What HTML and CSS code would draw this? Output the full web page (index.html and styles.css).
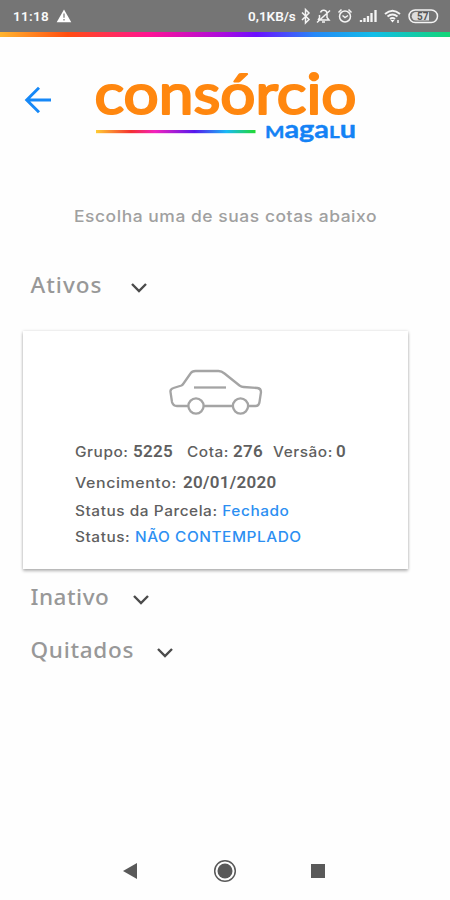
FILE: index.html
```html
<!DOCTYPE html>
<html lang="pt-BR">
<head>
<meta charset="utf-8">
<title>Consórcio Magalu</title>
<link rel="stylesheet" href="styles.css">
</head>
<body>
<div class="status">
  <span class="clock">11:18</span>
  <svg class="warning" width="16" height="14" viewBox="0 0 16 14"><path d="M8 .5 15.3 13.3H.7Z" fill="#fff"/><path d="M8 4.5v4.3M8 10v1.6" stroke="#888" stroke-width="1.4"/></svg>
  <span class="speed">0,1KB/s</span>
  <svg class="indicators" width="143" height="18" viewBox="299 7 143 18" fill="none" stroke="#f4f4f4" stroke-width="1.5">
    <path d="m302 12.500 7 7-3.500 3.500v-13.500l3.500 3.500-7 7"/>
    <path d="M318 20h11l-2-2.500v-4c0-4-5.500-4.500-6.500-1M319.500 15v3L318 20M322 22h3M317 22.500l13-12"/>
    <circle cx="345" cy="16.500" r="5.500"/><path d="M342.500 15.500l2.500 2 3-2M338.500 12.500l3-3M351.500 12.500l-3-3"/>
    <path d="M361 22v-2M364.500 22v-4M368 22v-6M371.500 22v-9M375.500 22V10" stroke-width="2.300"/>
    <path d="M385 14q7.500-6.500 15 0M387.500 16.500q5-4 10 0M390 19q2.500-2 5 0" stroke-width="2"/><path d="m390.500 20 2 2.500 2-2.500Z" fill="#fff" stroke="none"/><path d="M398 20v3"/>
    <rect x="409" y="10" width="28.500" height="12.500" rx="6.250"/><path d="M416 12h13v8.500h-13a4.200 4.200 0 0 1 0-8.500" fill="#ddd" stroke="none"/>
    <text class="battery" x="417" y="20">57</text>
  </svg>
</div>
<div class="rainbow"></div>
<header class="header">
  <svg class="back" width="28" height="28" viewBox="0 0 28 28"><path d="M27 14H2.500M15 1.700 2.700 14 15 26.300" fill="none" stroke="#1688f7" stroke-width="2.900"/></svg>
  <svg class="logo" width="266" height="80" viewBox="92 67 266 80">
    <defs><linearGradient id="line" x1="96" x2="255" y1="0" y2="0" gradientUnits="userSpaceOnUse"><stop stop-color="#fc3"/><stop offset=".22" stop-color="#f43030"/><stop offset=".37" stop-color="#f321bd"/><stop offset=".62" stop-color="#5518ed"/><stop offset=".82" stop-color="#19b9f5"/><stop offset="1" stop-color="#21d934"/></linearGradient></defs>
    <text class="brand" x="94.500" y="113.500" textLength="262" lengthAdjust="spacingAndGlyphs">consórcio</text>
    <rect x="96" y="130" width="159.500" height="3.200" fill="url(#line)"/>
    <text class="magalu" x="265" y="138" textLength="91" lengthAdjust="spacingAndGlyphs"><tspan class="cap">M</tspan>aga<tspan class="cap">L</tspan>u</text>
  </svg>
</header>
<main>
  <p class="prompt">Escolha uma de suas cotas abaixo</p>
  <div class="section active"><span class="name">Ativos</span><svg class="chevron" viewBox="0 0 18 12"><path d="m2 2 7 7 7-7"/></svg></div>
  <article class="card">
    <svg class="car" width="96" height="48" viewBox="167 367 96 48" fill="none" stroke="#a4a4a4" stroke-width="2.300" stroke-linejoin="round">
      <path d="M188 406h-11q-4 0-5-4l-1.500-10q-.5-3 3-4l8-2.500q1-.5 2-2l7-10q1.500-2.500 5-2.500h23q3 0 6 2.500l15 12q2 1.500 4 1.500l14 1q3.500.5 3.500 4l-1.500 10q-.5 4-4 4h-7M204 406h29"/>
      <circle cx="196" cy="406" r="7.600"/><circle cx="240.500" cy="406" r="7.600"/><path d="M194 387.500h32"/>
    </svg>
    <div class="line numbers"><span class="label group">Grupo:</span><b class="group-value">5225</b><span class="label quota">Cota:</span><b class="quota-value">276</b><span class="label version">Versão:</span><b>0</b></div>
    <div class="line due"><span class="label due-label">Vencimento:</span><b class="date">20/01/2020</b></div>
    <div class="line parcel"><span class="label">Status da Parcela: <em>Fechado</em></span></div>
    <div class="line state"><span class="label">Status: <em>NÃO CONTEMPLADO</em></span></div>
  </article>
  <div class="section inactive"><span class="name">Inativo</span><svg class="chevron" viewBox="0 0 18 12"><path d="m2 2 7 7 7-7"/></svg></div>
  <div class="section paid"><span class="name">Quitados</span><svg class="chevron" viewBox="0 0 18 12"><path d="m2 2 7 7 7-7"/></svg></div>
</main>
<nav class="nav">
  <svg width="16" height="24" viewBox="0 0 16 24"><path d="M1 12 15 4v16Z" fill="#595959"/></svg>
  <svg width="24" height="24" viewBox="0 0 24 24"><circle cx="12" cy="12" r="10.300" fill="none" stroke="#595959" stroke-width="1.500"/><circle cx="12" cy="12" r="7.500" fill="#595959"/></svg>
  <svg width="16" height="24" viewBox="0 0 16 24"><path d="M1 5h14v14H1Z" fill="#595959"/></svg>
</nav>
</body>
</html>
```
FILE: styles.css
```css
* { box-sizing: border-box; }
body { margin: 0; width: 450px; height: 900px; background: #fefefe; display: flex; flex-direction: column; font-family: Inter, sans-serif; overflow: hidden; }
svg { display: block; flex: none; }
.status { height: 32px; background: #757575; color: #fafafa; display: flex; align-items: center; padding-left: 13px; font: 600 13.5px/32px Roboto, sans-serif; white-space: nowrap; }
.clock { width: 43px; letter-spacing: .3px; }
.speed { margin-left: 176px; width: 51px; font-size: 13.5px; letter-spacing: 0; }
.battery { font: 700 10px Roboto, sans-serif; fill: #555; stroke: none; }
.rainbow { height: 5px; background: linear-gradient(90deg, #ffb52e 0, #ff4d10 15%, #ff1493 33%, #a80be0 50%, #6b10ff 57%, #2589f7 70%, #12bde8 83%, #13d676 100%); }
.header { display: flex; padding: 30px 0 0 24px; height: 110px; }
.back { margin-top: 19px; }
.logo { margin-left: 40px; overflow: visible; }
.brand { font: 400 57px Lato, sans-serif; fill: #ff870f; stroke: #ff870f; stroke-width: 2.2px; stroke-linejoin: round; }
.magalu { font: 700 24.5px Lato, sans-serif; fill: #1482f5; stroke: #1482f5; stroke-width: .4px; stroke-linejoin: round; }
.magalu .cap { font-size: 17.5px; }
main { display: flex; flex-direction: column; }
.prompt { margin: 57px 0 0 74px; width: 280px; font-size: 16px; line-height: 24px; font-weight: 500; letter-spacing: .5px; color: #a0a0a0; white-space: nowrap; transform: scaleX(1.09); transform-origin: left; }
.section { display: flex; align-items: center; padding-left: 30px; height: 32px; font: 500 22.5px/32px "Noto Sans", sans-serif; color: #989898; }
.chevron { width: 18px; height: 12px; margin-top: 5px; fill: none; stroke: #4b4b4b; stroke-width: 2.4px; }
.name { letter-spacing: .7px; text-indent: .5px; }
.active { margin-top: 41px; }
.active .name { width: 100px; letter-spacing: 1px; }
.inactive { margin-top: 12px; }
.inactive .name { width: 102px; letter-spacing: .5px; }
.paid { margin-top: 21px; }
.paid .name { width: 126px; }
.card { margin: 30px 0 0 23px; width: 385px; height: 238px; background: #fff; box-shadow: 0 2px 3px rgba(0,0,0,.28), 0 0 3px rgba(0,0,0,.13); padding: 36px 0 0 52px; color: #5f5f5f; font-size: 14px; font-weight: 500; }
.car { margin-left: 92px; }
.line { display: flex; white-space: nowrap; letter-spacing: .5px; }
.label { transform: scaleX(1.1); transform-origin: left; }
.line b { font: 600 17px/24px Roboto, sans-serif; letter-spacing: .3px; }
.line em { font-style: normal; color: #2c8ff2; }
.numbers { margin-top: 24px; height: 24px; line-height: 24px; align-items: baseline; }
.group { width: 58px; }
.group-value { width: 54px; }
.quota { width: 46px; }
.quota-value { width: 40px; }
.version { width: 63px; }
.due { margin-top: 7px; height: 24px; line-height: 24px; align-items: baseline; }
.due-label { width: 108px; transform: scaleX(1.14); }
.parcel { margin-top: 5px; line-height: 24px; }
.state { margin-top: 2px; line-height: 24px; }
.nav { margin: auto 0 17px; display: flex; padding-left: 122px; align-items: center; }
.nav svg + svg { margin-left: 75px; }
.nav svg + svg + svg { margin-left: 73px; }
```
